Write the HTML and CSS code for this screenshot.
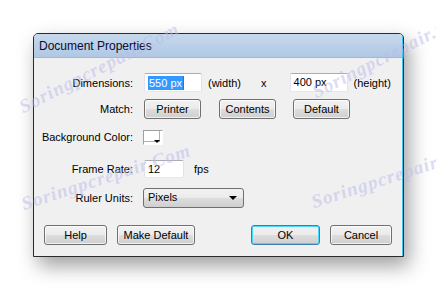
FILE: index.html
```html
<!DOCTYPE html>
<html lang="en">
<head>
    <meta charset="UTF-8">
    <title>Document Properties</title>
    <link rel="stylesheet" href="styles.css">
</head>
<body>
    <div class="stage">
        <div class="window">
            <div class="titlebar">Document Properties</div>
            <div class="content">
                <!-- Dimensions -->
                <div class="row row-dim">
                    <span class="label">Dimensions:</span>
                    <span class="field w58"><span class="sel">550 px</span><span class="caret"></span></span>
                    <span class="unit">(width)</span>
                    <span class="times">x</span>
                    <span class="field w58">400 px</span>
                    <span class="unit">(height)</span>
                </div>

                <div class="row row-match">
                    <span class="label">Match:</span>
                    <button class="btn b-printer">Printer</button>
                    <button class="btn b-contents">Contents</button>
                    <button class="btn b-default">Default</button>
                </div>

                <div class="row row-bg">
                    <span class="label">Background Color:</span>
                    <span class="swatch"><span class="swatch-in"></span><span class="tri"></span></span>
                </div>

                <div class="row row-rate">
                    <span class="label">Frame Rate:</span>
                    <span class="field w40">12</span>
                    <span class="unit fps">fps</span>
                </div>

                <div class="row row-ruler">
                    <span class="label">Ruler Units:</span>
                    <span class="select">Pixels<span class="arrow"></span></span>
                </div>

                <!-- Footer buttons -->
                <div class="footer">
                    <button class="btn b-help">Help</button>
                    <button class="btn b-make">Make Default</button>
                    <button class="btn b-ok">OK</button>
                    <button class="btn b-cancel">Cancel</button>
                </div>
            </div>
        </div>

        <!-- watermark overlay -->
        <div class="wm wm1">Soringpcrepair.Com</div>
        <div class="wm wm2">Soringpcrepair.Com</div>
        <div class="wm wm3">Soringpcrepair.Com</div>
        <div class="wm wm4">Soringpcrepair.Com</div>
    </div>
</body>
</html>
```

FILE: styles.css
```css
/* General Styles */
body {
    margin: 0;
    background: #fff;
    font-family: 'Liberation Sans', Arial, sans-serif;
    font-size: 11px;
    color: #000;
}

.stage {
    position: relative;
    padding: 33px 0 0 33px;
    width: 436px;
    height: 290px;
    box-sizing: border-box;
    overflow: hidden;
}

.window {
    width: 371px;
    height: 224px;
    box-sizing: border-box;
    border: 1px solid #2b2b2b;
    border-radius: 5px 5px 0 0;
    background: #f0f0f0;
    box-shadow: 5px 9px 20px rgba(0, 0, 0, 0.38);
    overflow: hidden;
}

.titlebar {
    height: 23px;
    line-height: 24px;
    padding-left: 5px;
    font-size: 12px;
    color: #0a0a30;
    background: linear-gradient(#c6d8ec, #b0c8e4);
    border-bottom: 1px solid #9fb8d6;
    border-right: 1px solid #3cc4ee;
}

.content {
    height: 199px;
    box-sizing: border-box;
    padding-top: 15px;
    border-right: 1px solid #3cc4ee;
    border-bottom: 1px solid #3cc4ee;
}

.row {
    display: flex;
    align-items: center;
}

.label {
    width: 99px;
    text-align: right;
    margin-right: 11px;
    flex-shrink: 0;
}

.row-dim { height: 19px; }
.row-match { height: 20px; margin-top: 7px; }
.row-bg { height: 14px; margin-top: 11px; }
.row-rate { height: 18px; margin-top: 16px; }
.row-ruler { height: 19px; margin-top: 10px; }

.field {
    height: 19px;
    box-sizing: border-box;
    background: #fff;
    border: 1px solid #e2e3ea;
    border-top-color: #abadb3;
    border-bottom-color: #e3e9ef;
    border-radius: 2px;
    padding: 0 3px;
    line-height: 17px;
    display: flex;
    align-items: center;
}

.w58 { width: 58px; }
.w40 { width: 40px; height: 18px; }

.sel {
    background: #3399ff;
    color: #fff;
    line-height: 14px;
    padding: 0 1px;
}

.caret {
    display: inline-block;
    width: 1px;
    height: 14px;
    background: #b05a00;
}

.unit { margin-left: 6px; }
.times { margin-left: 20px; margin-right: 23px; }
.fps { margin-left: 10px; }

.btn {
    font-family: 'Liberation Sans', Arial, sans-serif;
    font-size: 11px;
    height: 20px;
    padding: 0;
    color: #000;
    border: 1px solid #707070;
    border-radius: 3px;
    background: linear-gradient(#f2f2f2 0%, #ebebeb 48%, #dddddd 52%, #cfcfcf 100%);
    box-shadow: inset 0 0 0 1px rgba(255, 255, 255, 0.7);
}

.b-printer { width: 57px; }
.b-contents { width: 57px; margin-left: 18px; }
.b-default { width: 57px; margin-left: 17px; }

.swatch {
    margin-left: -1px;
    width: 20px;
    height: 15px;
    box-sizing: border-box;
    border: 1px solid #a0a0a0;
    border-right-color: #fff;
    border-bottom-color: #fff;
    background: #fff;
    position: relative;
}

.swatch-in {
    display: block;
    width: 15px;
    height: 10px;
    border-right: 1px solid #b0b0b0;
    border-bottom: 1px solid #b0b0b0;
}

.tri {
    position: absolute;
    right: 2px;
    bottom: 1px;
    width: 0;
    height: 0;
    border-left: 3px solid transparent;
    border-right: 3px solid transparent;
    border-top: 3px solid #000;
}

.select {
    margin-left: -1px;
    width: 101px;
    height: 20px;
    box-sizing: border-box;
    border: 1px solid #707070;
    border-radius: 3px;
    background: linear-gradient(#f2f2f2 0%, #ebebeb 48%, #dddddd 52%, #cfcfcf 100%);
    padding-left: 4px;
    line-height: 17px;
    position: relative;
}

.arrow {
    position: absolute;
    right: 6px;
    top: 7px;
    border-left: 4px solid transparent;
    border-right: 4px solid transparent;
    border-top: 4px solid #000;
}

.footer {
    display: flex;
    margin-top: 18px;
    padding-left: 10px;
}

.b-help { width: 63px; }
.b-make { width: 78px; margin-left: 10px; }
.b-ok {
    width: 69px;
    margin-left: 56px;
    border-color: #3c7fb1;
    box-shadow: inset 0 0 0 1px #48d8fb;
}
.b-cancel { width: 62px; margin-left: 10px; }

/* watermark */
.wm {
    position: absolute;
    font-family: 'Liberation Serif', serif;
    font-style: italic;
    font-weight: bold;
    font-size: 19px;
    line-height: 20px;
    letter-spacing: 1px;
    color: rgba(185, 185, 235, 0.5);
    pointer-events: none;
    white-space: nowrap;
    transform-origin: left bottom;
}

.wm1 { left: 25px; top: 97px; transform: rotate(-27deg); }
.wm2 { left: 318px; top: 82px; transform: rotate(-27deg); }
.wm3 { left: 25px; top: 194px; transform: rotate(-18deg); }
.wm4 { left: 315px; top: 192px; transform: rotate(-18deg); }
```
